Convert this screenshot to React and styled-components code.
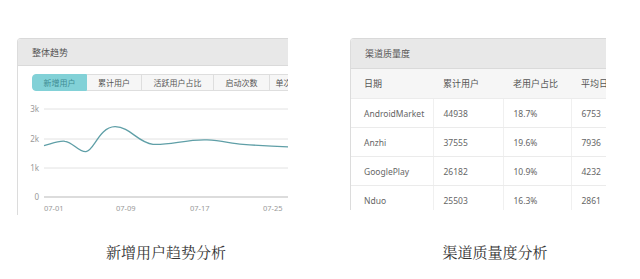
import React from 'react';
import styled, { createGlobalStyle } from 'styled-components';

const GlobalStyle = createGlobalStyle`
  html, body {
    margin: 0;
    padding: 0;
    background: #ffffff;
  }
  body {
    font-family: "Noto Sans", "Noto Sans CJK SC", sans-serif;
  }
`;

const tabs = ['新增用户', '累计用户', '活跃用户占比', '启动次数', '单次使用时长'];
const tabWidths = [55, 55, 72, 56, 60];

const columns = [
  { title: '日期', width: 82 },
  { title: '累计用户', width: 70 },
  { title: '老用户占比', width: 68 },
  { title: '平均日', width: 70 },
];

const rows = [
  ['AndroidMarket', '44938', '18.7%', '6753'],
  ['Anzhi', '37555', '19.6%', '7936'],
  ['GooglePlay', '26182', '10.9%', '4232'],
  ['Nduo', '25503', '16.3%', '2861'],
];

const gridLines = [
  { label: '3k', y: 12 },
  { label: '2k', y: 42 },
  { label: '1k', y: 71 },
  { label: '0', y: 100 },
];

const dates = [
  { label: '07-01', x: 26 },
  { label: '07-09', x: 98 },
  { label: '07-17', x: 172 },
  { label: '07-25', x: 245 },
];

const curve =
  'M26,48.7 C33,47 40,43.5 47,44.3 C55,45 60,55 68,54.6 C76,54 81,30 97,29.7 ' +
  'C112,29.5 120,46 135,47.3 C150,48.5 170,42 189,42.9 C205,43.5 212,46.5 225,47.3 ' +
  'C240,48.5 255,49.5 272,50';

const TrendChart = () => (
  <ChartSvg width="270" height="120" viewBox="0 0 270 120">
    {gridLines.map((g) => (
      <g key={g.label}>
        <line
          x1="26"
          x2="270"
          y1={g.y}
          y2={g.y}
          stroke={g.label === '0' ? '#dcdcdc' : '#e2e2e2'}
          strokeWidth={g.label === '0' ? 2 : 1}
        />
        <text x="21" y={g.y + 3} textAnchor="end" fontSize="8" fill="#999">
          {g.label}
        </text>
      </g>
    ))}
    {dates.map((d) => (
      <text key={d.label} x={d.x} y="114" fontSize="7.5" fill="#999">
        {d.label}
      </text>
    ))}
    <path d={curve} fill="none" stroke="#5f9fa7" strokeWidth="1.3" />
  </ChartSvg>
);

export default function App() {
  return (
    <>
      <GlobalStyle />
      <Page>
        <LeftFigure>
          <TrendCard>
            <CardHeader>整体趋势</CardHeader>
            <TabBar>
              {tabs.map((t, i) => (
                <Tab key={t} $active={i === 0} $width={tabWidths[i]}>
                  {t}
                </Tab>
              ))}
            </TabBar>
            <TrendChart />
          </TrendCard>
          <Caption $gap={27}>新增用户趋势分析</Caption>
        </LeftFigure>

        <RightFigure>
          <TableCard>
            <CardHeader $tall>渠道质量度</CardHeader>
            <Table>
              <colgroup>
                {columns.map((c) => (
                  <col key={c.title} style={{ width: c.width }} />
                ))}
              </colgroup>
              <thead>
                <tr>
                  {columns.map((c) => (
                    <Th key={c.title}>{c.title}</Th>
                  ))}
                </tr>
              </thead>
              <tbody>
                {rows.map((r) => (
                  <tr key={r[0]}>
                    {r.map((c, i) => (
                      <Td key={i}>{c}</Td>
                    ))}
                  </tr>
                ))}
              </tbody>
            </Table>
          </TableCard>
          <Caption $gap={32}>渠道质量度分析</Caption>
        </RightFigure>
      </Page>
    </>
  );
}

const Page = styled.div`
  display: flex;
  width: 640px;
  height: 279px;
  padding-top: 38px;
  box-sizing: border-box;
  overflow: hidden;
`;

const Figure = styled.div`
  display: flex;
  flex-direction: column;
`;

const LeftFigure = styled(Figure)`
  margin-left: 17px;
  width: 298px;
`;

const RightFigure = styled(Figure)`
  margin-left: 35px;
  width: 290px;
`;

const Card = styled.div`
  height: 177px;
  box-sizing: border-box;
  border-top: 1px solid #d9d9d9;
  border-left: 1px solid #dcdcdc;
  border-top-left-radius: 4px;
  overflow: hidden;
  background: #ffffff;
`;

const TrendCard = styled(Card)`
  width: 271px;
`;

const TableCard = styled(Card)`
  width: 256px;
  height: 172px;
`;

const CardHeader = styled.div`
  height: ${(p) => (p.$tall ? '29px' : '26px')};
  line-height: ${(p) => (p.$tall ? '30px' : '28px')};
  padding-left: 14px;
  background: #e8e8e8;
  border-bottom: 1px solid #dadada;
  font-size: 9px;
  color: #555;
`;

const TabBar = styled.div`
  display: flex;
  margin: 8px 0 0 14px;
  height: 17px;
  width: 300px;
`;

const Tab = styled.div`
  flex: 0 0 ${(p) => p.$width}px;
  box-sizing: border-box;
  height: 17px;
  line-height: 15px;
  text-align: center;
  font-size: 8px;
  white-space: nowrap;
  color: ${(p) => (p.$active ? '#3f8d94' : '#555')};
  background: ${(p) => (p.$active ? '#82d1d7' : '#f6f6f6')};
  border: 1px solid ${(p) => (p.$active ? '#82d1d7' : '#dedede')};
  border-left-width: ${(p) => (p.$active ? '1px' : '0')};
  border-radius: ${(p) => (p.$active ? '4px 0 0 4px' : '0')};
`;

const ChartSvg = styled.svg`
  display: block;
  margin-top: 6px;
  font-family: "Noto Sans", sans-serif;
`;

const Table = styled.table`
  border-collapse: collapse;
  width: 290px;
  table-layout: fixed;
  font-size: 8.5px;
  color: #666;
`;

const Th = styled.th`
  height: 29px;
  padding: 0 0 0 10px;
  text-align: left;
  font-weight: 400;
  font-size: 9px;
  color: #555;
  background: #f6f6f6;
  border-bottom: 1px solid #ececec;
  white-space: nowrap;
  overflow: hidden;

  &:first-child {
    padding-left: 13px;
  }
`;

const Td = styled.td`
  height: 28px;
  padding: 0 0 0 10px;
  border-bottom: 1px solid #ebebeb;
  border-right: 1px solid #f0f0f0;
  white-space: nowrap;
  overflow: hidden;

  &:first-child {
    padding-left: 13px;
  }
`;

const Caption = styled.div`
  margin-top: ${(p) => p.$gap}px;
  text-align: center;
  font-family: "Noto Serif CJK SC", "Noto Sans CJK SC", serif;
  font-size: 15px;
  line-height: 20px;
  color: #333;
`;
